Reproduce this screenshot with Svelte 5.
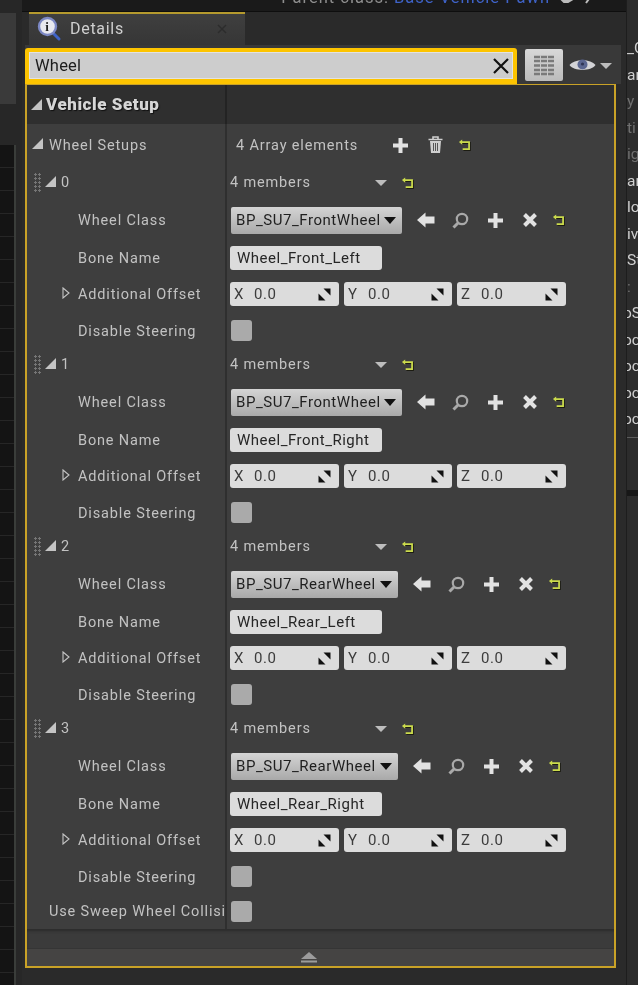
<script>
  const wheels = [
    { id: 0, cls: 'BP_SU7_FrontWheel', bone: 'Wheel_Front_Left', clsWide: true },
    { id: 1, cls: 'BP_SU7_FrontWheel', bone: 'Wheel_Front_Right', clsWide: true },
    { id: 2, cls: 'BP_SU7_RearWheel', bone: 'Wheel_Rear_Left', clsWide: false },
    { id: 3, cls: 'BP_SU7_RearWheel', bone: 'Wheel_Rear_Right', clsWide: false }
  ];
  const axes = ['X', 'Y', 'Z'];
  const edge = ['_C', 'ar', 'y', 'ti', 'ig', 'ar', 'lo', 'iv', 'St', ':', 'oS', 'oc', 'oc', 'oc', 'oc'];
</script>

{#snippet reset()}
  <svg class="reset" width="14" height="14" viewBox="0 0 12 12" aria-hidden="true">
    <path d="M2.5 3.5H9.5V9.5H4" fill="none" stroke="#1c1c12" stroke-width="1.6" transform="translate(.7 .8)" />
    <path d="M2.5 3.5H9.5V9.5H4" fill="none" stroke="#ccdc4c" stroke-width="1.5" />
    <path d="M0.8 3.5L3.6 1.2V5.8Z" fill="#ccdc4c" />
  </svg>
{/snippet}

{#snippet plus()}
  <svg width="17" height="17" viewBox="0 0 17 17" aria-hidden="true"><path d="M8.5 1V16M1 8.5H16" stroke="#e2e2e2" stroke-width="4" /></svg>
{/snippet}

<div class="shell">
  <aside class="left">
    <div class="left-top"></div>
    <div class="left-lines"></div>
  </aside>

  <main class="mid">
    <div class="crumb"><span class="crumb-text">Parent class: <b>Base Vehicle Pawn</b></span>
      <svg class="crumb-icons" width="34" height="10" viewBox="0 0 34 10" aria-hidden="true"><path d="M2 5L8 1H13V4L8 7H4ZM26 8L31 1" stroke="#bbb" stroke-width="2" fill="#bbb" /></svg>
    </div>
    <div class="tabrow">
      <div class="tab">
        <svg width="26" height="26" viewBox="0 0 26 26" aria-hidden="true">
          <path d="M15.5 16.5L22 23" stroke="#3f63c8" stroke-width="3" stroke-linecap="round" />
          <circle cx="10.5" cy="10.5" r="8.5" fill="#e9e9ef" stroke="#7c88c4" stroke-width="2.4" />
          <text x="10.5" y="15" class="info">i</text>
        </svg>
        <span class="tab-title">Details</span>
        <svg class="tab-x" width="10" height="10" viewBox="0 0 10 10" aria-hidden="true"><path d="M1 1L9 9M9 1L1 9" stroke="#2c2c2c" stroke-width="1.4" /></svg>
      </div>
    </div>

    <div class="searchrow">
      <div class="search">
        <span class="search-text">Wheel</span>
        <svg width="18" height="18" viewBox="0 0 18 18" aria-hidden="true"><path d="M2 2L16 16M16 2L2 16" stroke="#111" stroke-width="2.2" /></svg>
      </div>
      <div class="gridbtn">
        <svg width="20" height="21" viewBox="0 0 20 21" aria-hidden="true"><path d="M0 2H20M0 6H20M0 10.500H20M0 15H20M0 19H20" stroke="#7a7a7a" stroke-width="2.6" /><path d="M6.500 0V21M13.500 0V21" stroke="#c8c8c8" stroke-width="1" /></svg>
      </div>
      <svg class="eye" width="27" height="16" viewBox="0 0 27 16" aria-hidden="true">
        <path d="M0.5 8C5 1.5 22 1.5 26.5 8C22 14.5 5 14.5 0.5 8Z" fill="#d3d3d6" />
        <circle cx="13.5" cy="7.5" r="5" fill="#5b6690" />
        <circle cx="13.5" cy="7" r="1.6" fill="#2f3554" />
      </svg>
      <i class="caret light big"></i>
    </div>

    <section class="panel">
      <div class="row head">
        <div class="name"><i class="tri tri-a"></i><strong>Vehicle Setup</strong></div>
        <div class="val"></div>
      </div>

      <div class="row setups">
        <div class="name"><i class="tri tri-b"></i><span>Wheel Setups</span></div>
        <div class="val array">
          <span class="count">4 Array elements</span>
          {@render plus()}
          <svg class="trash" width="15" height="18" viewBox="0 0 15 18" aria-hidden="true">
            <path d="M0.5 3.5H14.5M5 3V1H10V3" stroke="#cfcfcf" stroke-width="1.6" fill="none" />
            <path d="M2 5H13L12 17H3Z" fill="#cfcfcf" />
            <path d="M5.5 7V15M7.5 7V15M9.5 7V15" stroke="#555" stroke-width="1" />
          </svg>
          {@render reset()}
        </div>
      </div>

      {#each wheels as w}
        <div class="row group">
          <div class="name">
            <span class="grip"></span><i class="tri tri-c"></i><span class="index">{w.id}</span>
          </div>
          <div class="val members">
            <span class="count-m">4 members</span>
            <i class="caret light"></i>
            {@render reset()}
          </div>
        </div>

        <div class="row cls">
          <div class="name sub"><span>Wheel Class</span></div>
          <div class="val tools">
            <div class="combo" class:wide={w.clsWide}>
              <span>{w.cls}</span><i class="caret dark"></i>
            </div>
            <svg class="t-arrow" width="18" height="16" viewBox="0 0 18 16" aria-hidden="true"><path d="M0 8L8.5 0.5V4.5H17.5V11.5H8.5V15.5Z" fill="#e2e2e2" /></svg>
            <svg class="t-lens" width="17" height="17" viewBox="0 0 17 17" aria-hidden="true"><circle cx="10" cy="7" r="5.2" fill="none" stroke="#a9a9a9" stroke-width="2.2" /><path d="M6 11L1.5 15.5" stroke="#a9a9a9" stroke-width="3" /></svg>
            <span class="t-plus">{@render plus()}</span>
            <svg class="t-x" width="16" height="16" viewBox="0 0 16 16" aria-hidden="true"><path d="M2.5 2.5L13.5 13.5M13.5 2.5L2.5 13.5" stroke="#e2e2e2" stroke-width="4" /></svg>
            <span class="t-reset">{@render reset()}</span>
          </div>
        </div>

        <div class="row bone">
          <div class="name sub"><span>Bone Name</span></div>
          <div class="val"><div class="field bonefield">{w.bone}</div></div>
        </div>

        <div class="row offset">
          <div class="name sub">
            <svg class="open-tri" width="8" height="12" viewBox="0 0 8 12" aria-hidden="true"><path d="M1 1L7 6L1 11Z" fill="none" stroke="#c4c4c4" stroke-width="1.1" /></svg>
            <span>Additional Offset</span>
          </div>
          <div class="val vector">
            {#each axes as a, i}
              <div class="field axis" class:edge={i !== 1}>
                <span class="axis-label">{a}</span><span class="axis-num">0.0</span>
                <svg class="drag" width="13" height="13" viewBox="0 0 13 13" aria-hidden="true"><path d="M5.5 0.5H12.5V7.5ZM0.5 5.5L7.5 12.5H0.5Z" fill="#111" /></svg>
              </div>
            {/each}
          </div>
        </div>

        <div class="row steer">
          <div class="name sub"><span>Disable Steering</span></div>
          <div class="val"><div class="check"></div></div>
        </div>
      {/each}

      <div class="row sweep">
        <div class="name"><span>Use Sweep Wheel Collision</span></div>
        <div class="val"><div class="check"></div></div>
      </div>

      <div class="fill"></div>
      <div class="foot">
        <svg width="16" height="12" viewBox="0 0 16 12" aria-hidden="true"><path d="M8 0L16 7H0Z" fill="#9c9c9c" /><path d="M0 9.5H16" stroke="#9c9c9c" stroke-width="2" /></svg>
      </div>
    </section>
  </main>

  <aside class="right">
    <div class="right-text">
      {#each edge as e}<span class:dim={['y','ti','ig',':'].includes(e)} class:cut={e === 'oc' || e === 'oS'}>{e}</span>{/each}
    </div>
    <div class="right-rule"></div>
    <div class="right-bar"></div>
  </aside>
</div>

<style>
  :global(body) {
    margin: 0;
    background: #252525;
  }
  .shell {
    width: 638px;
    height: 985px;
    overflow: hidden;
    display: grid;
    grid-template-columns: 22px 604px 12px;
    background: #272727;
    font-family: Roboto, "Liberation Sans", sans-serif;
    color: #c2c2c2;
    font-size: 14.5px;
    letter-spacing: 0.85px;
    filter: blur(0.4px);
  }

  /* left strip */
  .left {
    display: flex;
    flex-direction: column;
    padding-top: 13px;
    gap: 41px;
  }
  .left-top {
    height: 91px;
    width: 16px;
    background: #3a3a3a;
  }
  .left-lines {
    flex: 1;
    width: 14px;
    background: repeating-linear-gradient(#141414 0 22px, #262626 22px 23px);
    border-right: 2px solid #3a3d3a;
  }

  /* middle */
  .mid {
    display: flex;
    flex-direction: column;
    min-width: 0;
    background: #2a2a2a;
  }
  .crumb {
    height: 11px;
    flex: none;
    display: flex;
    justify-content: flex-end;
    align-items: flex-end;
    gap: 10px;
    padding-right: 32px;
    background: #1a1a1a;
    overflow: hidden;
    border-bottom: 1px solid #0e0e0e;
    font-size: 16.5px;
    letter-spacing: 1px;
    line-height: 16px;
    color: #8f8f8f;
  }
  .crumb-text {
    margin-bottom: 5px;
  }
  .crumb-icons {
    margin-bottom: 6px;
  }
  .crumb-text b {
    font-weight: 400;
    color: #3f63c8;
  }
  .tabrow {
    height: 33px;
    flex: none;
    padding-left: 7px;
    display: flex;
    background: #2a2a2a;
  }
  .tab {
    width: 216px;
    display: flex;
    align-items: center;
    gap: 7px;
    padding: 0 18px 2px 8px;
    box-sizing: border-box;
    background: linear-gradient(#3f3f3f, #363636);
    border-top: 2px solid #b59a2e;
  }
  .info {
    font: 700 13px "Liberation Serif", serif;
    fill: #222;
    text-anchor: middle;
  }
  .tab-title {
    font-size: 16px;
    color: #cfcfcf;
    letter-spacing: 0.7px;
    flex: 1;
  }

  .searchrow {
    height: 39px;
    flex: none;
    display: flex;
    align-items: flex-start;
    background: #393939;
    padding-top: 3px;
    box-sizing: border-box;
    width: 596px;
    margin-left: 3px;
    position: relative;
    z-index: 1;
  }
  .search {
    width: 492px;
    height: 36px;
    box-sizing: border-box;
    border: 4px solid #fdc400;
    border-bottom-width: 5px;
    border-top-left-radius: 3px;
    border-top-right-radius: 3px;
    background: #cdcdcd;
    box-shadow: inset 0 0 0 1px #e2e2e2;
    display: flex;
    align-items: center;
    justify-content: space-between;
    padding: 0 3px 0 6px;
    color: #1c1c1c;
    font-size: 16.5px;
    letter-spacing: 0.2px;
  }
  .gridbtn {
    width: 38px;
    height: 32px;
    margin: 1px 0 0 8px;
    display: flex;
    align-items: center;
    justify-content: center;
    background: linear-gradient(#d8d8d8, #bcbcbc);
    border-radius: 2px;
  }
  .eye {
    margin: 9px 0 0 6px;
  }
  .caret {
    width: 0;
    height: 0;
    display: block;
    border-left: 6px solid transparent;
    border-right: 6px solid transparent;
  }
  .caret.light {
    border-top: 6px solid #bdbdbd;
  }
  .caret.big {
    margin: 15px 0 0 4px;
  }
  .caret.dark {
    border-top: 7px solid #111;
  }

  .panel {
    width: 591px;
    height: 885px;
    margin: -1px 0 0 3px;
    box-sizing: border-box;
    border: 2px solid #c9a227;
    display: flex;
    flex-direction: column;
    background: #3e3e3e;
  }
  .row {
    display: grid;
    grid-template-columns: 200px 1fr;
    flex: none;
  }
  .name {
    display: flex;
    align-items: center;
    border-right: 2px solid #2f2f2f;
    white-space: nowrap;
    overflow: hidden;
    min-width: 0;
    padding-top: 1px;
    box-sizing: border-box;
  }
  .val {
    display: flex;
    align-items: center;
    min-width: 0;
    padding-left: 4px;
  }
  .head {
    height: 39px;
    background: #2f2f2f;
  }
  .head .name {
    padding: 0 0 1px 4px;
    border-right-color: #232323;
    color: #d6d6d6;
    font-size: 17px;
    letter-spacing: 0.55px;
    font-weight: 700;
    text-shadow: 1px 1px 1px #111;
  }
  .tri {
    width: 0;
    height: 0;
    display: block;
    flex: none;
    border-left: 11px solid transparent;
    border-bottom: 11px solid #c4c4c4;
  }
  .tri-a {
    margin-right: 4px;
  }
  .setups {
    height: 41px;
  }
  .setups .name {
    padding-left: 5px;
  }
  .tri-b {
    margin-right: 6px;
    margin-top: -3px;
  }
  .array {
    gap: 0;
    padding-left: 9px;
    padding-top: 1px;
  }
  .count {
    width: 156px;
  }
  .trash {
    margin: 0 0 0 19px;
  }
  .array .reset {
    margin-left: 15px;
  }
  .group {
    height: 34px;
  }
  .group .name {
    padding-left: 7px;
  }
  .grip {
    width: 8px;
    height: 20px;
    flex: none;
    margin-right: 3px;
    background: radial-gradient(circle at 1.5px 1.5px, #767676 1px, transparent 1.2px) 0 0 / 4px 4px;
  }
  .tri-c {
    margin-right: 5px;
    margin-top: -3px;
  }
  .members {
    padding-left: 3px;
    padding-top: 1px;
  }
  .count-m {
    width: 145px;
  }
  .members .reset {
    margin-left: 14px;
  }
  .cls {
    height: 42px;
  }
  .sub {
    padding-left: 51px;
    position: relative;
  }
  .tools {
    padding-left: 4px;
  }
  .combo {
    width: 167px;
    height: 27px;
    box-sizing: border-box;
    padding: 0 6px 0 5px;
    display: flex;
    align-items: center;
    justify-content: space-between;
    border-radius: 2px;
    background: linear-gradient(#d4d4d4, #a9a9a9);
    color: #1f1f1f;
    font-size: 15px;
    letter-spacing: 0.55px;
    white-space: nowrap;
    overflow: hidden;
  }
  .combo.wide {
    width: 171px;
  }
  .t-arrow {
    margin-left: 15px;
    flex: none;
  }
  .t-lens {
    margin-left: 17px;
    flex: none;
  }
  .t-plus {
    margin-left: 18px;
    display: flex;
  }
  .t-x {
    margin-left: 18px;
    flex: none;
  }
  .t-reset {
    margin-left: 14px;
    display: flex;
  }
  .bone {
    height: 33px;
  }
  .field {
    background: #dcdcdc;
    color: #262626;
    border-radius: 3px;
    height: 24px;
    box-sizing: border-box;
    display: flex;
    align-items: center;
    font-size: 15px;
    letter-spacing: 0.5px;
    white-space: nowrap;
  }
  .bonefield {
    width: 152px;
    padding-left: 7px;
  }
  .bone .val,
  .offset .val,
  .steer .val,
  .sweep .val {
    padding-left: 3px;
  }
  .offset {
    height: 40px;
  }
  .open-tri {
    position: absolute;
    left: 35px;
    top: 13px;
  }
  .vector {
    gap: 5px;
  }
  .axis {
    width: 108px;
    padding: 0 8px 0 4px;
    flex: none;
  }
  .axis.edge {
    width: 109px;
  }
  .axis-label {
    width: 20px;
    color: #3c3c3c;
  }
  .axis-num {
    flex: 1;
    color: #3c3c3c;
  }
  .steer {
    height: 33px;
  }
  .check {
    width: 21px;
    height: 21px;
    margin-left: 1px;
    border-radius: 3px;
    background: #aaaaaa;
  }
  .sweep {
    height: 36px;
  }
  .sweep .name {
    padding-left: 22px;
  }
  .sweep .check {
    margin-top: 1px;
  }
  .fill {
    flex: 1;
    box-shadow: inset 0 3px 3px -1px #2b2b2b;
    background: #3b3b3b;
    border-bottom: 1px solid #353535;
  }
  .foot {
    height: 17px;
    flex: none;
    background: #454443;
    display: flex;
    justify-content: center;
    align-items: center;
    padding-right: 24px;
  }

  /* right */
  .right {
    background: #2c2c2c;
    border-left: 1px solid #1d1d1d;
    overflow: hidden;
    display: flex;
    flex-direction: column;
    padding-top: 35px;
  }
  .right-text {
    display: flex;
    flex-direction: column;
    font-size: 15.5px;
    line-height: 26.5px;
    color: #cfcfcf;
    letter-spacing: 0;
    white-space: nowrap;
  }
  .right-text .dim {
    color: #707070;
  }
  .right-text .cut {
    margin-left: -4px;
  }
  .right-rule {
    margin-top: 4px;
    height: 1px;
    background: #5c5c5c;
    flex: none;
  }
  .right-bar {
    margin-top: 52px;
    height: 6px;
    background: #171717;
    flex: none;
  }
</style>
